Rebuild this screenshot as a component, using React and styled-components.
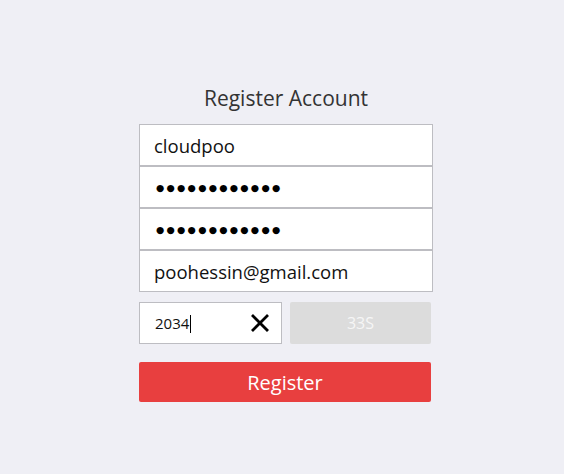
import React from "react";
import styled, { createGlobalStyle } from "styled-components";

const GlobalStyle = createGlobalStyle`
  html, body {
    margin: 0;
    padding: 0;
    background: #efeff5;
    font-family: "Open Sans", "Noto Sans", sans-serif;
  }
`;

const Page = styled.div`
  min-height: 474px;
  padding: 84px 0 0 139px;
  box-sizing: border-box;
`;

const Form = styled.div`
  width: 294px;
  display: flex;
  flex-direction: column;
`;

const Title = styled.h1`
  margin: 0 0 12px;
  height: 28px;
  line-height: 28px;
  font-size: 21px;
  font-weight: 400;
  color: #333;
  text-align: center;
`;

const Field = styled.div`
  height: 42px;
  box-sizing: border-box;
  border: 1px solid #bdbdc2;
  background: #fff;
  display: flex;
  align-items: center;
  padding: 0 14px;
  font-size: 18.5px;
  color: #111;
`;

const Dots = styled.span`
  margin-left: 2px;
  font-family: "DejaVu Sans", sans-serif;
  font-size: 9.5px;
  letter-spacing: 2.25px;
  color: #000;
`;

const CodeRow = styled.div`
  display: flex;
  gap: 8px;
  margin-top: 10px;
`;

const CodeField = styled(Field)`
  width: 143px;
  padding: 0 11px 0 15px;
  font-size: 15px;
  justify-content: space-between;
`;

const Caret = styled.span`
  display: inline-block;
  width: 1px;
  height: 18px;
  margin-left: 1px;
  background: #000;
  vertical-align: middle;
`;

const CountButton = styled.button`
  width: 141px;
  height: 42px;
  border: none;
  border-radius: 2px;
  background: #dcdcdc;
  color: #f6f6f6;
  font-family: inherit;
  font-size: 16px;
  padding: 0;
`;

const SubmitButton = styled.button`
  margin-top: 18px;
  width: 292px;
  height: 40px;
  border: none;
  border-radius: 2px;
  background: #e83f3f;
  color: #fff;
  font-family: inherit;
  font-size: 20px;
  padding: 0;
`;

const ClearIcon = () => (
  <svg width="20" height="20" viewBox="0 0 20 20">
    <path d="M2 2 L18 18 M18 2 L2 18" stroke="#000" strokeWidth="2.8" fill="none" />
  </svg>
);

export default function App() {
  return (
    <Page>
      <GlobalStyle />
      <Form>
        <Title>Register Account</Title>
        <Field>cloudpoo</Field>
        <Field>
          <Dots>●●●●●●●●●●●●</Dots>
        </Field>
        <Field>
          <Dots>●●●●●●●●●●●●</Dots>
        </Field>
        <Field>poohessin@gmail.com</Field>
        <CodeRow>
          <CodeField>
            <span>
              2034
              <Caret />
            </span>
            <ClearIcon />
          </CodeField>
          <CountButton>33S</CountButton>
        </CodeRow>
        <SubmitButton>Register</SubmitButton>
      </Form>
    </Page>
  );
}
